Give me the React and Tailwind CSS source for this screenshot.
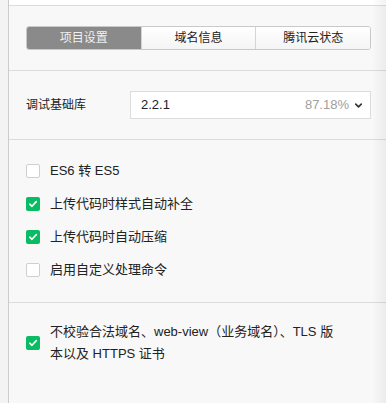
import { ChevronDown } from "lucide-react";

const font = { fontFamily: '"Liberation Sans", "Noto Sans CJK SC", sans-serif' };

function Box({ checked }) {
  if (!checked) {
    return <span className="w-[14px] h-[14px] shrink-0 rounded-[2px] border border-[#cfcfcf] bg-white" />;
  }
  return (
    <span className="w-[14px] h-[14px] shrink-0 rounded-[2px] bg-[#09bb62] flex items-center justify-center">
      <svg width="10" height="10" viewBox="0 0 10 10" fill="none">
        <path d="M1.8 5.2 L4 7.3 L8.3 2.6" stroke="white" strokeWidth="1.6" strokeLinecap="round" strokeLinejoin="round" />
      </svg>
    </span>
  );
}

function Row({ checked, label }) {
  return (
    <div className="h-[33px] flex items-center gap-[10px]">
      <Box checked={checked} />
      <span className="text-[13px] text-[#222]">{label}</span>
    </div>
  );
}

export default function App() {
  const tabs = ["项目设置", "域名信息", "腾讯云状态"];

  return (
    <div className="relative w-[386px] h-[403px] flex overflow-hidden bg-[#f8f8f8]" style={font}>
      <div className="w-[9px] bg-[#f3f3f3] border-r border-[#cccccc] shrink-0" />

      <div className="flex-1 flex flex-col">
        <div className="h-[6px] bg-white border-b border-[#dcdcdc]" />

        <div className="pl-[17px] pr-[15px] pt-[20px] pb-[20px] border-b border-[#dcdcdc]">
          <div className="flex h-[24px] rounded-[3px] border border-[#c9c9c9] overflow-hidden">
            {tabs.map((t, i) => (
              <div
                key={t}
                className={
                  i === 0
                    ? "flex-1 flex items-center justify-center text-[12px] text-[#f0f0f0] bg-[#8a8a8a]"
                    : "flex-1 flex items-center justify-center text-[12px] text-[#222] bg-gradient-to-b from-white to-[#f4f4f4] border-l border-[#d4d4d4]"
                }
              >
                {t}
              </div>
            ))}
          </div>
        </div>

        <div className="pl-[17px] pr-[15px] pt-[20px] pb-[20px] flex items-center border-b border-[#dcdcdc]">
          <span className="w-[104px] text-[12px] text-[#222]">调试基础库</span>
          <div className="flex-1 h-[28px] bg-white border border-[#dcdcdc] flex items-center pl-[10px] pr-[6px]">
            <span className="text-[13px] text-[#222] flex-1">2.2.1</span>
            <span className="text-[13px] text-[#a0a0a0]">87.18%</span>
            <ChevronDown size={11} strokeWidth={3.5} className="ml-[4px] text-[#333]" />
          </div>
        </div>

        <div className="pl-[17px] pr-[15px] pt-[14px] pb-[16px] border-b border-[#dcdcdc]">
          <Row checked={false} label="ES6 转 ES5" />
          <Row checked label="上传代码时样式自动补全" />
          <Row checked label="上传代码时自动压缩" />
          <Row checked={false} label="启用自定义处理命令" />
        </div>

        <div className="pl-[17px] pr-[15px] pt-[18px] flex items-center gap-[10px]">
          <Box checked />
          <span className="w-[296px] text-[13px] leading-[22px] text-[#222]">
            不校验合法域名、web-view（业务域名）、TLS 版本以及 HTTPS 证书
          </span>
        </div>
      </div>

      <div className="absolute top-0 right-0 w-[14px] h-full pointer-events-none bg-gradient-to-r from-transparent to-[#0000000d]" />
    </div>
  );
}
